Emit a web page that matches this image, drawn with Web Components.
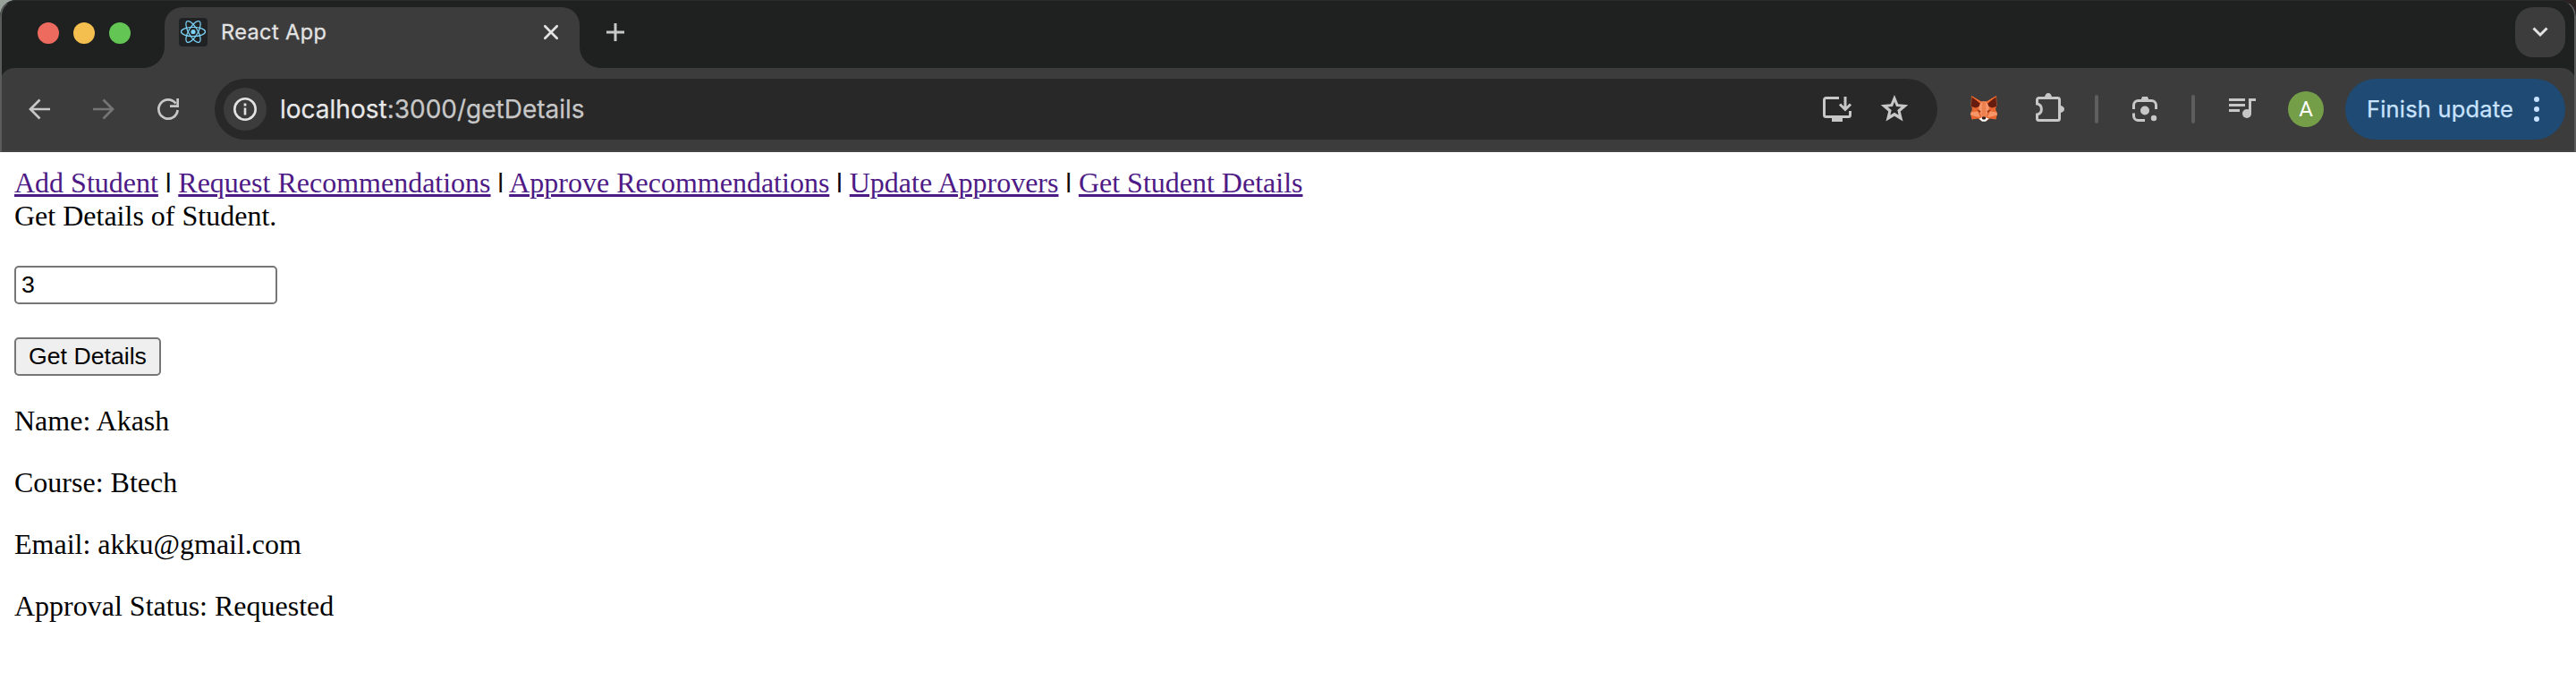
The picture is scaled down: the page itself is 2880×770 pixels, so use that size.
<!DOCTYPE html>
<html lang="en">
<head>
<meta charset="utf-8">
<title>React App</title>
<style>
html, body { margin: 0; height: 100%; background: #fff; overflow: hidden; }
</style>
</head>
<body>
<browser-window>
  <tab-strip slot="tabs"><browser-tab>React App</browser-tab></tab-strip>
  <tool-bar slot="toolbar"></tool-bar>
  <student-page></student-page>
</browser-window>
<script>
const define = (name, html, init) => {
  const t = document.createElement('template');
  t.innerHTML = html;
  customElements.define(name, class extends HTMLElement {
    constructor() {
      super();
      this.attachShadow({ mode: 'open' }).append(t.content.cloneNode(true));
      if (init) init(this.shadowRoot, this);
    }
  });
};

const ICONS = {
  back: [24, 24, '<path d="M12.5 1.5L2 12l10.500 10.500M2 12h22" fill="none" stroke="currentColor" stroke-width="2.700"/>'],
  forward: [24, 24, '<path d="M11.500 1.500L22 12 11.500 22.500M22 12H0" fill="none" stroke="currentColor" stroke-width="2.700"/>'],
  reload: [24, 24, '<path d="M22.600 13A10.650 10.650 0 1 1 20.500 5.600" fill="none" stroke="currentColor" stroke-width="2.700"/><path d="M21.300 0H24V10H14V7.300H21.300Z" fill="currentColor"/>'],
  info: [26, 26, '<circle cx="13" cy="13" r="11.700" fill="none" stroke="currentColor" stroke-width="2.600"/><path d="M11.700 11.600h2.600v8h-2.600zM11.600 6.600h2.800v2.800h-2.800z" fill="currentColor"/>'],
  install: [32, 28, '<path d="M18 1.500H3.500a2 2 0 0 0-2 2V20.500a2 2 0 0 0 2 2H28.500a2 2 0 0 0 2-2V16" fill="none" stroke="currentColor" stroke-width="3"/><path d="M10 22h12v6H10z" fill="currentColor"/><path d="M25 0v14M19 8.500l6 6 6-6" fill="none" stroke="currentColor" stroke-width="3"/>'],
  star: [32, 30, '<path fill-rule="evenodd" fill="currentColor" d="M16 0l4.200 10.300L31.300 11.200l-8.500 7.300L25.500 29.500 16 23.700 6.500 29.500 9.200 18.500.7 11.200l11.100-.900zM16 7.800l-2 5.200-5.500.5 4.200 3.600-1.300 5.500 4.600-2.800 4.600 2.800-1.300-5.500 4.200-3.600-5.500-.5z"/>'],
  fox: [30, 30, '<path fill="#e8662f" d="M1 0L12 6.500h6L29 0l.5 11-1.500 4 2 5-1.500 6.500-7-1L18 28h-6l-3.500-2.500-7 1L0 20l2-5L.500 11z"/><path fill="#f5966b" d="M12 6.500L9 13l2 6 1.500 6L15 23.500 17.500 25l1.500-6 2-6-3-6.500z"/><path fill="#ee7f4e" d="M13 6.500h4l.5 17h-5z"/><path fill="#f5966b" d="M.500 18.500L8 17.500l3 6L9 24 0 21.500zM29.500 18.500L22 17.500l-3 6 2 .5 9-2.500z"/><path fill="#661d0f" d="M1.500 1.500L11 8 9.500 12 6 13.500.800 12zM28.500 1.500L19 8l1.500 4 3.500 1.500 5.200-1.500z"/><path fill="#ef6c33" d="M1 0L13 7l-2.500 1.500zM29 0L17 7l2.500 1.500z"/><path fill="#8b2f16" d="M7 15.500l4.500 1.500-1 2zM23 15.500L18.500 17l1 2z"/><path fill="#fff" d="M9.500 25.500l3-1h5l3 1L17 28.700h-4z"/><path fill="#2b1a16" d="M13.300 23.500h3.400l.500 2-1 1h-2.400l-1-1z"/>'],
  puzzle: [32, 32, '<path d="M3.500 5.500H24.500a2 2 0 0 1 2 2V28.500a2 2 0 0 1-2 2H3.500a2 2 0 0 1-2-2V24c6.500-1.500 6.500-10.500 0-12V7.500a2 2 0 0 1 2-2z" fill="none" stroke="currentColor" stroke-width="3"/><path fill="currentColor" d="M10 5a4 5 0 0 1 8 0zM27 14a5 4 0 0 1 0 8z"/>'],
  lens: [28, 28, '<path d="M1.500 14V9.500a5 5 0 0 1 5-5H21.500a5 5 0 0 1 5 5V14M1.500 18.500v3a5 5 0 0 0 5 5H14" fill="none" stroke="currentColor" stroke-width="3"/><path d="M9 5l2-5h6l2 5z" fill="currentColor"/><circle cx="14" cy="15.500" r="5" fill="currentColor"/><circle cx="24" cy="24" r="3.200" fill="currentColor"/>'],
  queue: [30, 22, '<path d="M0 0h18v3H0zM0 6h18v3H0zM0 12h12v3H0zM22 0h8v3h-5v14h-3z" fill="currentColor"/><circle cx="20" cy="17" r="5" fill="currentColor"/>'],
  dots: [6, 28, '<g fill="currentColor"><circle cx="3" cy="3" r="3"/><circle cx="3" cy="14" r="3"/><circle cx="3" cy="25" r="3"/></g>'],
  chevron: [18, 12, '<path d="M1.500 1.500L9 9l7.500-7.500" fill="none" stroke="currentColor" stroke-width="3"/>'],
  close: [16, 16, '<path d="M1.300 1.300L14.700 14.700M14.700 1.300L1.300 14.700" fill="none" stroke="currentColor" stroke-width="2.700" stroke-linecap="round"/>'],
  plus: [20, 20, '<path d="M10 0v20M0 10h20" fill="none" stroke="currentColor" stroke-width="3"/>'],
  react: [32, 32, '<rect width="32" height="32" rx="4" fill="#202223"/><g fill="none" stroke="#7bd3f7" stroke-width="1.250"><ellipse cx="16" cy="15.500" rx="13.500" ry="5.100"/><ellipse cx="16" cy="15.500" rx="13.500" ry="5.100" transform="rotate(60 16 15.500)"/><ellipse cx="16" cy="15.500" rx="13.500" ry="5.100" transform="rotate(120 16 15.500)"/></g><circle cx="16" cy="15.500" r="2.600" fill="#7bd3f7"/>']
};
define('ui-icon', '<style>:host{display:block;flex:none}svg{display:block;overflow:visible}</style>', (root, host) => {
  const [w, h, body] = ICONS[host.getAttribute('name')];
  const box = document.createElement('div');
  box.innerHTML = `<svg width="${w}" height="${h}" viewBox="0 0 ${w} ${h}">${body}</svg>`;
  root.append(box);
});

define('browser-window', `
<style>
:host{display:flex;flex-direction:column;height:770px;position:relative;background:#fff}
.chrome{height:170px;flex:none;box-sizing:border-box;background:#1f2120;border-radius:18px 18px 0 0;display:flex;flex-direction:column;overflow:hidden;position:relative}
.back{background:linear-gradient(90deg,#98a09a 0 50%,#2a2220 50%);flex:none}
.chrome::after{content:"";position:absolute;inset:0;border:2px solid #5a5b5b;border-top:1px solid #2b2d2c;border-bottom:0;border-radius:18px 18px 0 0;pointer-events:none}
main{flex:1;min-height:0}
</style>
<div class="back"><div class="chrome"><slot name="tabs"></slot><slot name="toolbar"></slot></div></div>
<main><slot></slot></main>`);

define('tab-strip', `
<style>
:host{display:flex;height:76px;flex:none;box-sizing:border-box;padding:8px 12px 0 42px;align-items:flex-start;color:#c7c7c7}
.lights{display:flex;gap:16px;padding-top:17px;width:142px}
i{width:24px;height:24px;border-radius:50%}
.plus{margin:18px 0 0 30px}
.search{margin-left:auto;width:56px;height:56px;border-radius:20px;background:#3c3c3c;display:flex;align-items:center;justify-content:center;color:#e3e3e3}
</style>
<div class="lights"><i style="background:#ed6a5f"></i><i style="background:#f5bf4f"></i><i style="background:#62c554"></i></div>
<slot></slot>
<ui-icon class="plus" name="plus"></ui-icon>
<div class="search"><ui-icon name="chevron"></ui-icon></div>`);

define('browser-tab', `
<style>
:host{display:flex;position:relative;box-sizing:border-box;width:464px;height:68px;padding:0 24px 12px 16px;align-items:center;background:#3c3c3c;border-radius:20px 20px 0 0;color:#e3e3e3;font:400 23.500px/30px Inter,sans-serif}
:host::before,:host::after{content:"";position:absolute;bottom:0;width:24px;height:24px}
:host::before{right:100%;background:radial-gradient(circle at 0 0,transparent 23.500px,#3c3c3c 24.500px)}
:host::after{left:100%;background:radial-gradient(circle at 100% 0,transparent 23.500px,#3c3c3c 24.500px)}
.title{margin-left:15px;letter-spacing:.4px;-webkit-text-stroke:.3px #e3e3e3}
.x{margin-left:auto}
</style>
<ui-icon name="react"></ui-icon><span class="title"><slot></slot></span><ui-icon class="x" name="close"></ui-icon>`);

define('tool-bar', `
<style>
:host{display:flex;height:94px;box-sizing:border-box;padding:0 12px 0 32px;align-items:center;background:#3c3c3c;border-bottom:2px solid #454345;border-radius:16px 16px 0 0;color:#c7c7c7;font-family:Inter,sans-serif}
.nav{display:flex;gap:48px;width:208px}
.dim{color:#757575}
.omni{display:flex;align-items:center;box-sizing:border-box;width:1926px;height:68px;border-radius:34px;background:#282828;padding:0 32px 0 10px}
.info{width:48px;height:48px;border-radius:50%;background:#3c3c3c;display:flex;align-items:center;justify-content:center;color:#e3e3e3}
.url{margin-left:15px;font-size:28px;line-height:34px;letter-spacing:0;-webkit-text-stroke:.25px}
.url b{font-weight:400;color:#e8e8e8}
.install{margin-left:auto;margin-right:32px}
.sep{width:4px;height:32px;border-radius:2px;background:#5e5e5e}
.avatar{width:40px;height:40px;border-radius:50%;background:#759e48;color:#fff;font:24px/41px Roboto,sans-serif;text-align:center;margin-left:36px}
.update{display:flex;align-items:center;box-sizing:border-box;width:246px;height:68px;border-radius:34px;background:#1f4a73;color:#c8e3ff;margin-left:24px;padding:0 29px 0 24px;font-size:25.500px;line-height:32px;justify-content:space-between;letter-spacing:.18px;-webkit-text-stroke:.25px}
</style>
<div class="nav"><ui-icon name="back"></ui-icon><ui-icon class="dim" name="forward"></ui-icon><ui-icon name="reload"></ui-icon></div>
<div class="omni"><div class="info"><ui-icon name="info"></ui-icon></div><span class="url"><b>localhost</b>:3000/getDetails</span><ui-icon class="install" name="install"></ui-icon><ui-icon style="margin-bottom:2px" name="star"></ui-icon></div>
<ui-icon style="margin-left:37px" name="fox"></ui-icon>
<ui-icon style="margin:-4px 0 0 43px" name="puzzle"></ui-icon>
<div class="sep" style="margin-left:34px"></div>
<ui-icon style="margin-left:38px" name="lens"></ui-icon>
<div class="sep" style="margin-left:38px"></div>
<ui-icon style="margin:-2px 0 0 38px" name="queue"></ui-icon>
<div class="avatar">A</div>
<div class="update"><span>Finish update</span><ui-icon name="dots"></ui-icon></div>`);

define('nav-links', `
<style>
:host{display:block;height:37px;white-space:nowrap}
a{color:#4e1b86;text-decoration:underline;text-decoration-thickness:3px;text-underline-offset:2px}
span{display:inline-block;vertical-align:top;height:37px;clip-path:inset(7px 0 8px);-webkit-text-stroke:.8px #000}
</style>
<a href="#add">Add Student</a> <span>|</span> <a href="#request">Request Recommendations</a> <span>|</span> <a href="#approve">Approve Recommendations</a> <span>|</span> <a href="#update">Update Approvers</a> <span>|</span> <a href="#get">Get Student Details</a>`);

define('student-field', `
<style>
:host{display:block;line-height:0;margin-top:37px}
input,button{box-sizing:border-box;height:43px;border:2px solid #767676;border-radius:5px;font:26.667px/30px "Liberation Sans",Arial,sans-serif;color:#000;margin:0;display:block}
input{width:294px;padding:2px 6px;background:#fff}
button{width:164px;padding:0 0 1px;background:#efefef;margin-top:37px}
</style>
<input value="3"><button>Get Details</button>`);

define('detail-row', `<style>:host{display:block;margin-top:32px}</style><slot></slot>`);

define('student-page', `
<style>
:host{display:block;padding:16px;font:32px/37px "Liberation Serif","Times New Roman",serif;color:#000}
</style>
<nav-links></nav-links>
<div>Get Details of Student.</div>
<student-field></student-field>
<detail-row>Name: Akash</detail-row>
<detail-row>Course: Btech</detail-row>
<detail-row>Email: akku@gmail.com</detail-row>
<detail-row>Approval Status: Requested</detail-row>`);
</script>
</body>
</html>
